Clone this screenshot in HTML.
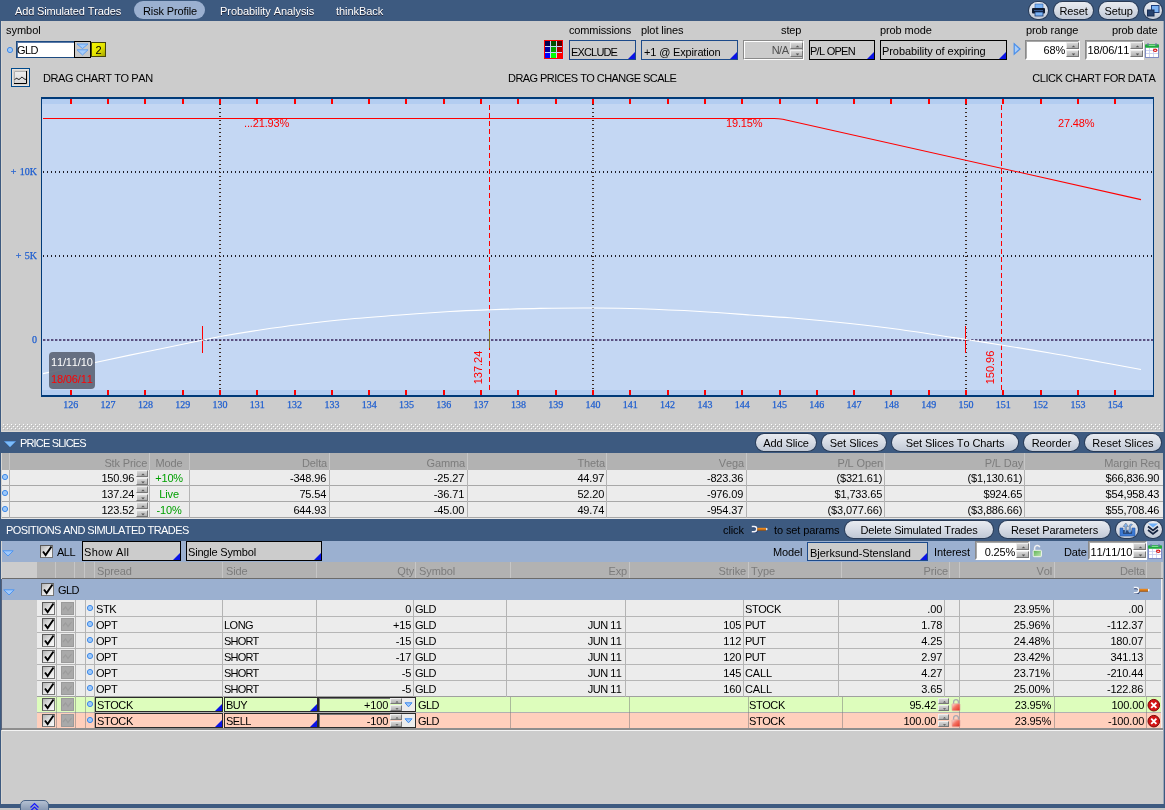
<!DOCTYPE html>
<html><head><meta charset="utf-8"><title>Risk Profile</title>
<style>
html,body{margin:0;padding:0;}
body{width:1165px;height:810px;overflow:hidden;position:relative;background:#3d5a80;font-family:"Liberation Sans",sans-serif;font-size:11px;color:#000;font-kerning:none;}
.a{position:absolute;}
.t{white-space:nowrap;line-height:13px;height:13px;}
.s{white-space:nowrap;word-spacing:1px;font-family:"Liberation Serif",serif;font-size:10px;line-height:12px;color:#1f5fd0;-webkit-text-stroke:0.25px #1f5fd0;}
.sb{box-sizing:border-box;border:1px solid;border-color:#eee #777 #777 #eee;background:linear-gradient(#d8d8d8,#b0b0b0);}
</style></head><body>
<div id="root" style="position:absolute;left:0;top:0;width:1165px;height:810px;will-change:transform;">
<div class="a " style="left:0px;top:0px;width:1165px;height:21px;background:#3d5a80;"></div>
<div class="a t " style="left:15px;top:5px;letter-spacing:-0.14px;color:#fff;text-shadow:0 1px 0 #223;">Add Simulated Trades</div>
<div class="a " style="left:134px;top:1px;width:71px;height:18px;border-radius:9px;background:#9bb0d0;"></div>
<div class="a t " style="left:143px;top:5px;letter-spacing:-0.13px;">Risk Profile</div>
<div class="a t " style="left:220px;top:5px;letter-spacing:-0.06px;color:#fff;text-shadow:0 1px 0 #223;">Probability Analysis</div>
<div class="a t " style="left:336px;top:5px;letter-spacing:-0.06px;color:#fff;text-shadow:0 1px 0 #223;">thinkBack</div>
<div class="a " style="left:1029px;top:2px;width:19px;height:16.5px;border-radius:10px;background:linear-gradient(#e8ebf0,#d8dde6 45%,#c0c8d5);box-shadow:0 0 0 1px #2a3b55;"></div>
<div class="a " style="left:1054px;top:2px;width:39px;height:16.5px;border-radius:10px;background:linear-gradient(#e8ebf0,#d8dde6 45%,#c0c8d5);box-shadow:0 0 0 1px #2a3b55;"></div>
<div class="a t " style="left:1053.05px;width:41px;top:5px;text-align:center;letter-spacing:-0.10px;">Reset</div>
<div class="a " style="left:1099px;top:2px;width:39px;height:16.5px;border-radius:10px;background:linear-gradient(#e8ebf0,#d8dde6 45%,#c0c8d5);box-shadow:0 0 0 1px #2a3b55;"></div>
<div class="a t " style="left:1098.05px;width:41px;top:5px;text-align:center;letter-spacing:-0.10px;">Setup</div>
<div class="a " style="left:1144px;top:2px;width:18px;height:16.5px;border-radius:10px;background:linear-gradient(#e8ebf0,#d8dde6 45%,#c0c8d5);box-shadow:0 0 0 1px #2a3b55;"></div>
<svg class="a" style="left:1031px;top:3px" width="15" height="14" viewBox="0 0 15 14"><rect x="4" y="1" width="8" height="4.5" fill="#7ab2f4" stroke="#2c5aa0" stroke-width="0.6"/><rect x="1" y="5" width="13" height="5.5" rx="1" fill="#0e1a30"/><rect x="4" y="9" width="8" height="4" fill="#7ab2f4" stroke="#1c3a70" stroke-width="0.8"/><rect x="3" y="7" width="9" height="1" fill="#3a5a90"/></svg>
<svg class="a" style="left:1146px;top:3px" width="14" height="14" viewBox="0 0 14 14"><rect x="5.5" y="2.5" width="7.5" height="7" fill="#7ab2f4" stroke="#1b3c7a"/><rect x="1.5" y="7" width="6.5" height="6" fill="#26426e" stroke="#162c52"/></svg>
<div class="a " style="left:1px;top:21px;width:1px;height:783px;background:#d8d6d2;"></div>
<div class="a " style="left:2px;top:21px;width:1161px;height:411px;background:#cccccc;"></div>
<div class="a " style="left:1163px;top:21px;width:1px;height:411px;background:#9aa6b8;"></div>
<div class="a " style="left:1163px;top:541px;width:1px;height:263px;background:#9aa6b8;"></div>
<div class="a t " style="left:6px;top:24px;letter-spacing:-0.03px;">symbol</div>
<div class="a t " style="left:569px;top:24px;letter-spacing:-0.14px;">commissions</div>
<div class="a t " style="left:641px;top:24px;letter-spacing:-0.10px;">plot lines</div>
<div class="a t " style="left:781px;top:24px;letter-spacing:-0.10px;">step</div>
<div class="a t " style="left:880px;top:24px;letter-spacing:-0.10px;">prob mode</div>
<div class="a t " style="left:1026px;top:24px;letter-spacing:-0.10px;">prob range</div>
<div class="a t " style="left:1112px;top:24px;letter-spacing:-0.10px;">prob date</div>
<svg class="a" style="left:5.5px;top:46px" width="8" height="8"><circle cx="4" cy="4" r="2.6" fill="#9cc8fa" stroke="#3f8ae8" stroke-width="1"/></svg>
<div class="a " style="left:16px;top:41px;width:59px;height:17px;background:#fff;border:1px solid #1c4a80;box-sizing:border-box;box-shadow:inset 1px 1px 0 #5a7aa8;"></div>
<div class="a t " style="left:17px;top:44px;letter-spacing:-0.56px;">GLD</div>
<div class="a " style="left:74px;top:41px;width:17px;height:17px;background:#c8c8c8;border:1px solid #000;box-sizing:border-box;"></div>
<svg class="a" style="left:76px;top:43px" width="13" height="13" viewBox="0 0 13 13"><path d="M1 1 L12 1 L6.5 5.5 Z" fill="#a4ccfc" stroke="#5a9cf0" stroke-width="0.9"/><path d="M1 6.8 L12 6.8 L6.5 12 Z" fill="#a4ccfc" stroke="#5a9cf0" stroke-width="0.9"/></svg>
<div class="a " style="left:91px;top:42px;width:15px;height:15px;background:linear-gradient(135deg,#f6f600,#e4e400 55%,#a4a400);border:1px solid #45450a;box-sizing:border-box;"></div>
<div class="a t " style="left:91.58px;width:14px;top:44px;text-align:center;letter-spacing:-0.15px;">2</div>
<svg class="a" style="left:544px;top:40px" width="20" height="20" viewBox="0 0 20 20" shape-rendering="crispEdges"><rect x="1" y="1" width="19" height="19" fill="#bcd2f2"/><rect x="0" y="0" width="19" height="19" fill="#ff0000"/><rect x="1" y="1" width="17" height="17" fill="#c4d6f8"/><rect x="1" y="1" width="5" height="5" fill="#000050"/><rect x="7" y="1" width="5" height="5" fill="#005000"/><rect x="13" y="1" width="5" height="5" fill="#500000"/><rect x="1" y="7" width="5" height="5" fill="#0000a0"/><rect x="7" y="7" width="5" height="5" fill="#00a000"/><rect x="13" y="7" width="5" height="5" fill="#a80000"/><rect x="1" y="13" width="5" height="5" fill="#0000ff"/><rect x="7" y="13" width="5" height="5" fill="#00ff00"/><rect x="13" y="13" width="5" height="5" fill="#ff0000"/></svg>
<div class="a " style="left:569px;top:40px;width:67px;height:20px;background:#cccccc;border:1px solid #1c4a8a;box-sizing:border-box;"></div>
<svg class="a" style="left:628px;top:52px" width="7" height="7"><path d="M7 0 L7 7 L0 7 Z" fill="#0a14e6"/></svg>
<div class="a t " style="left:571px;top:46px;letter-spacing:-0.84px;">EXCLUDE</div>
<div class="a " style="left:641px;top:40px;width:97px;height:20px;background:#cccccc;border:1px solid #1c4a8a;box-sizing:border-box;"></div>
<svg class="a" style="left:730px;top:52px" width="7" height="7"><path d="M7 0 L7 7 L0 7 Z" fill="#0a14e6"/></svg>
<div class="a t " style="left:644px;top:46px;letter-spacing:-0.15px;">+1 @ Expiration</div>
<div class="a " style="left:743px;top:40px;width:61px;height:20px;background:#cccccc;border:1px solid;border-color:#8a8a8a #fff #fff #8a8a8a;box-sizing:border-box;"></div>
<div class="a " style="left:744px;top:41px;width:59px;height:18px;border:1px solid;border-color:#fff #8a8a8a #8a8a8a #fff;box-sizing:border-box;"></div>
<div class="a sb" style="left:790px;top:42px;width:13px;height:7px;"><svg class="a" style="left:0;top:0" width="13" height="7" viewBox="0 0 12 7"><path d="M4.2 4.2 L6 2.4 L7.8 4.2 Z" fill="#555"/></svg></div><div class="a sb" style="left:790px;top:50px;width:13px;height:7px;"><svg class="a" style="left:0;top:0" width="13" height="7" viewBox="0 0 12 7"><path d="M4.2 2.6 L6 4.4 L7.8 2.6 Z" fill="#555"/></svg></div>
<div class="a t " style="right:376.50px;top:44px;text-align:right;letter-spacing:-0.50px;color:#505050;">N/A</div>
<div class="a " style="left:809px;top:40px;width:66px;height:20px;background:#cccccc;border:1px solid #000;box-sizing:border-box;"></div>
<svg class="a" style="left:867px;top:52px" width="7" height="7"><path d="M7 0 L7 7 L0 7 Z" fill="#0a14e6"/></svg>
<div class="a t " style="left:810px;top:45px;letter-spacing:-0.73px;">P/L OPEN</div>
<div class="a " style="left:880px;top:40px;width:127px;height:20px;background:#cccccc;border:1px solid #000;box-sizing:border-box;"></div>
<svg class="a" style="left:999px;top:52px" width="7" height="7"><path d="M7 0 L7 7 L0 7 Z" fill="#0a14e6"/></svg>
<div class="a t " style="left:882px;top:45px;letter-spacing:-0.07px;">Probability of expiring</div>
<svg class="a" style="left:1013px;top:42px" width="9" height="14" viewBox="0 0 9 14"><path d="M1.2 1.8 L7 7 L1.2 12.2 Z" fill="#a9cdf8" stroke="#4a8fea" stroke-width="1.2"/></svg>
<div class="a " style="left:1025px;top:40px;width:55px;height:20px;background:#fff;border:1px solid;border-color:#8a8a8a #fff #fff #8a8a8a;box-sizing:border-box;"></div>
<div class="a " style="left:1026px;top:41px;width:53px;height:18px;border:1px solid;border-color:#a8a8a8 #fff #fff #a8a8a8;box-sizing:border-box;"></div>
<div class="a sb" style="left:1066px;top:42px;width:13px;height:7px;"><svg class="a" style="left:0;top:0" width="13" height="7" viewBox="0 0 12 7"><path d="M4.2 4.2 L6 2.4 L7.8 4.2 Z" fill="#555"/></svg></div><div class="a sb" style="left:1066px;top:50px;width:13px;height:7px;"><svg class="a" style="left:0;top:0" width="13" height="7" viewBox="0 0 12 7"><path d="M4.2 2.6 L6 4.4 L7.8 2.6 Z" fill="#555"/></svg></div>
<div class="a t " style="right:99.85px;top:44px;text-align:right;letter-spacing:-0.15px;color:#000;">68%</div>
<div class="a " style="left:1085px;top:40px;width:59px;height:20px;background:#fff;border:1px solid;border-color:#8a8a8a #fff #fff #8a8a8a;box-sizing:border-box;"></div>
<div class="a " style="left:1086px;top:41px;width:57px;height:18px;border:1px solid;border-color:#a8a8a8 #fff #fff #a8a8a8;box-sizing:border-box;"></div>
<div class="a sb" style="left:1130px;top:42px;width:13px;height:7px;"><svg class="a" style="left:0;top:0" width="13" height="7" viewBox="0 0 12 7"><path d="M4.2 4.2 L6 2.4 L7.8 4.2 Z" fill="#555"/></svg></div><div class="a sb" style="left:1130px;top:50px;width:13px;height:7px;"><svg class="a" style="left:0;top:0" width="13" height="7" viewBox="0 0 12 7"><path d="M4.2 2.6 L6 4.4 L7.8 2.6 Z" fill="#555"/></svg></div>
<div class="a t " style="right:35.85px;top:44px;text-align:right;letter-spacing:-0.15px;color:#000;">18/06/11</div>
<svg class="a" style="left:1145px;top:43px" width="14" height="15" viewBox="0 0 14 15"><rect x="0.5" y="3.5" width="13" height="11" fill="#fff" stroke="#7f8cc4"/><rect x="0" y="1.2" width="14" height="3.6" rx="1" fill="#1faa3c"/><rect x="3.5" y="2" width="7" height="1" fill="#7fe08f"/><rect x="2.5" y="0" width="1" height="3" fill="#6a6ab0"/><rect x="10.5" y="0" width="1" height="3" fill="#6a6ab0"/><path d="M1 7.5 H13 M1 10.5 H13 M4.5 5 V14 M8.5 5 V14" stroke="#c4cbee" stroke-width="0.8"/><ellipse cx="10.2" cy="7.3" rx="1.7" ry="1.2" fill="#fbe0e0" stroke="#d81818" stroke-width="1.1"/></svg>
<div class="a " style="left:11px;top:68px;width:19px;height:19px;background:#d6d3ce;border:1px solid #004a8c;box-sizing:border-box;box-shadow:inset 0 0 0 1px #e6e2de;"></div>
<svg class="a" style="left:14px;top:71px" width="13" height="13" viewBox="0 0 13 13"><defs><linearGradient id="ig" x1="0" y1="0" x2="0" y2="1"><stop offset="0" stop-color="#efefef"/><stop offset="1" stop-color="#d6d6d6"/></linearGradient></defs><rect x="0" y="0" width="13" height="13" fill="url(#ig)"/><path d="M0.5 12 V0.5 H12" stroke="#b0b0b0" stroke-width="1" fill="none"/><path d="M0 12.5 H12.5 V0" stroke="#000" stroke-width="1" fill="none"/><path d="M0.8 8.6 C1.8 7.2 2.6 7 3.6 7.8 S5.4 8.8 6.4 7.4 S8.2 6 9.2 7 S11 8.4 12 8.4" stroke="#000" stroke-width="1" fill="none"/></svg>
<div class="a t " style="left:43px;top:72px;letter-spacing:-0.41px;">DRAG CHART TO PAN</div>
<div class="a t " style="left:508px;top:72px;letter-spacing:-0.56px;">DRAG PRICES TO CHANGE SCALE</div>
<div class="a t " style="right:9.56px;top:72px;text-align:right;letter-spacing:-0.44px;">CLICK CHART FOR DATA</div>
<svg class="a" style="left:0;top:90px" width="1165" height="330" viewBox="0 90 1165 330" shape-rendering="crispEdges"><rect x="41" y="97" width="1113" height="300" fill="#003a78"/><rect x="42" y="99" width="1111" height="296" fill="#c4d7f3"/><rect x="42" y="99" width="1111" height="5" fill="#b3cdf1"/><rect x="42" y="390" width="1111" height="5" fill="#b3cdf1"/><line x1="43" y1="172" x2="1153" y2="172" stroke="#1e1e28" stroke-width="2" stroke-dasharray="1 3"/><line x1="43" y1="256" x2="1153" y2="256" stroke="#1e1e28" stroke-width="2" stroke-dasharray="1 3"/><line x1="43" y1="340" x2="1153" y2="340" stroke="#5a5080" stroke-width="2" stroke-dasharray="2.4 1.6" shape-rendering="auto"/><line x1="220" y1="99" x2="220" y2="390" stroke="#3c2a22" stroke-width="2" stroke-dasharray="1 3" stroke-dashoffset="-1"/><line x1="593" y1="99" x2="593" y2="390" stroke="#3c2a22" stroke-width="2" stroke-dasharray="1 3" stroke-dashoffset="-1"/><line x1="966" y1="99" x2="966" y2="390" stroke="#3c2a22" stroke-width="2" stroke-dasharray="1 3" stroke-dashoffset="-1"/><rect x="70" y="99" width="2" height="5" fill="#f00"/><rect x="70" y="390" width="2" height="5" fill="#f00"/><rect x="107" y="99" width="2" height="5" fill="#f00"/><rect x="107" y="390" width="2" height="5" fill="#f00"/><rect x="144" y="99" width="2" height="5" fill="#f00"/><rect x="144" y="390" width="2" height="5" fill="#f00"/><rect x="182" y="99" width="2" height="5" fill="#f00"/><rect x="182" y="390" width="2" height="5" fill="#f00"/><rect x="219" y="99" width="2" height="5" fill="#f00"/><rect x="219" y="390" width="2" height="5" fill="#f00"/><rect x="256" y="99" width="2" height="5" fill="#f00"/><rect x="256" y="390" width="2" height="5" fill="#f00"/><rect x="294" y="99" width="2" height="5" fill="#f00"/><rect x="294" y="390" width="2" height="5" fill="#f00"/><rect x="331" y="99" width="2" height="5" fill="#f00"/><rect x="331" y="390" width="2" height="5" fill="#f00"/><rect x="368" y="99" width="2" height="5" fill="#f00"/><rect x="368" y="390" width="2" height="5" fill="#f00"/><rect x="405" y="99" width="2" height="5" fill="#f00"/><rect x="405" y="390" width="2" height="5" fill="#f00"/><rect x="443" y="99" width="2" height="5" fill="#f00"/><rect x="443" y="390" width="2" height="5" fill="#f00"/><rect x="480" y="99" width="2" height="5" fill="#f00"/><rect x="480" y="390" width="2" height="5" fill="#f00"/><rect x="517" y="99" width="2" height="5" fill="#f00"/><rect x="517" y="390" width="2" height="5" fill="#f00"/><rect x="555" y="99" width="2" height="5" fill="#f00"/><rect x="555" y="390" width="2" height="5" fill="#f00"/><rect x="592" y="99" width="2" height="5" fill="#f00"/><rect x="592" y="390" width="2" height="5" fill="#f00"/><rect x="629" y="99" width="2" height="5" fill="#f00"/><rect x="629" y="390" width="2" height="5" fill="#f00"/><rect x="667" y="99" width="2" height="5" fill="#f00"/><rect x="667" y="390" width="2" height="5" fill="#f00"/><rect x="704" y="99" width="2" height="5" fill="#f00"/><rect x="704" y="390" width="2" height="5" fill="#f00"/><rect x="741" y="99" width="2" height="5" fill="#f00"/><rect x="741" y="390" width="2" height="5" fill="#f00"/><rect x="779" y="99" width="2" height="5" fill="#f00"/><rect x="779" y="390" width="2" height="5" fill="#f00"/><rect x="816" y="99" width="2" height="5" fill="#f00"/><rect x="816" y="390" width="2" height="5" fill="#f00"/><rect x="853" y="99" width="2" height="5" fill="#f00"/><rect x="853" y="390" width="2" height="5" fill="#f00"/><rect x="890" y="99" width="2" height="5" fill="#f00"/><rect x="890" y="390" width="2" height="5" fill="#f00"/><rect x="928" y="99" width="2" height="5" fill="#f00"/><rect x="928" y="390" width="2" height="5" fill="#f00"/><rect x="965" y="99" width="2" height="5" fill="#f00"/><rect x="965" y="390" width="2" height="5" fill="#f00"/><rect x="1002" y="99" width="2" height="5" fill="#f00"/><rect x="1002" y="390" width="2" height="5" fill="#f00"/><rect x="1040" y="99" width="2" height="5" fill="#f00"/><rect x="1040" y="390" width="2" height="5" fill="#f00"/><rect x="1077" y="99" width="2" height="5" fill="#f00"/><rect x="1077" y="390" width="2" height="5" fill="#f00"/><rect x="1114" y="99" width="2" height="5" fill="#f00"/><rect x="1114" y="390" width="2" height="5" fill="#f00"/><line x1="489.5" y1="105" x2="489.5" y2="390" stroke="#f00" stroke-width="1" stroke-dasharray="5 3"/><line x1="1001.5" y1="105" x2="1001.5" y2="390" stroke="#f00" stroke-width="1" stroke-dasharray="5 3"/><line x1="489.5" y1="331" x2="489.5" y2="348" stroke="#8a7a2c" stroke-width="1"/><line x1="202.5" y1="326" x2="202.5" y2="353" stroke="#f00" stroke-width="1"/><line x1="965.5" y1="326" x2="965.5" y2="353" stroke="#f00" stroke-width="1"/></svg>
<svg class="a" style="left:0;top:90px" width="1165" height="330" viewBox="0 90 1165 330"><path d="M43 373.6 C52.5 371.6 82.2 365.3 100 361.5 C117.8 357.7 133.0 354.5 150 351 C167.0 347.5 190.3 342.7 202 340.3 C213.7 337.9 210.3 338.2 220 336.5 C229.7 334.8 246.7 332.0 260 330 C273.3 328.0 285.0 326.3 300 324.5 C315.0 322.7 333.3 320.6 350 319 C366.7 317.4 383.3 316.2 400 315 C416.7 313.8 435.0 312.4 450 311.5 C465.0 310.6 475.0 310.3 490 309.8 C505.0 309.3 522.8 308.7 540 308.4 C557.2 308.1 576.3 307.9 593 308 C609.7 308.1 622.2 308.2 640 308.8 C657.8 309.4 681.7 310.5 700 311.5 C718.3 312.5 735.0 313.9 750 315 C765.0 316.1 773.3 316.4 790 317.8 C806.7 319.2 831.7 321.6 850 323.5 C868.3 325.4 880.7 326.8 900 329.5 C919.3 332.2 949.2 336.9 966 339.5 C982.8 342.1 987.0 342.8 1001 345 C1015.0 347.2 1033.5 350.2 1050 353 C1066.5 355.8 1084.8 359.2 1100 362 C1115.2 364.8 1134.2 368.2 1141 369.5" stroke="#fff" stroke-width="1.15" fill="none"/><path d="M43 118.5 L774 118.5 C780 118.5 781 119 785 119.7 L1141 199.6" stroke="#f00" stroke-width="1.1" fill="none"/></svg>
<div class="a t " style="left:244px;top:117px;letter-spacing:-0.15px;color:#f00;">...21.93%</div>
<div class="a t " style="left:726px;top:117px;letter-spacing:-0.15px;color:#f00;">19.15%</div>
<div class="a t " style="left:1058px;top:117px;letter-spacing:-0.15px;color:#f00;">27.48%</div>
<div class="a t" style="left:448px;top:361px;width:60px;height:13px;text-align:center;color:#f00;transform:rotate(-90deg);">137.24</div>
<div class="a t" style="left:960px;top:361px;width:60px;height:13px;text-align:center;color:#f00;transform:rotate(-90deg);">150.96</div>
<div class="a s" style="right:1128px;top:166px;">+ 10K</div>
<div class="a s" style="right:1128px;top:250px;">+ 5K</div>
<div class="a s" style="right:1128px;top:334px;">0</div>
<div class="a s" style="left:50.80000000000001px;width:40px;text-align:center;top:399px;">126</div>
<div class="a s" style="left:88.10000000000001px;width:40px;text-align:center;top:399px;">127</div>
<div class="a s" style="left:125.4px;width:40px;text-align:center;top:399px;">128</div>
<div class="a s" style="left:162.7px;width:40px;text-align:center;top:399px;">129</div>
<div class="a s" style="left:200.0px;width:40px;text-align:center;top:399px;">130</div>
<div class="a s" style="left:237.3px;width:40px;text-align:center;top:399px;">131</div>
<div class="a s" style="left:274.6px;width:40px;text-align:center;top:399px;">132</div>
<div class="a s" style="left:311.9px;width:40px;text-align:center;top:399px;">133</div>
<div class="a s" style="left:349.2px;width:40px;text-align:center;top:399px;">134</div>
<div class="a s" style="left:386.5px;width:40px;text-align:center;top:399px;">135</div>
<div class="a s" style="left:423.79999999999995px;width:40px;text-align:center;top:399px;">136</div>
<div class="a s" style="left:461.09999999999997px;width:40px;text-align:center;top:399px;">137</div>
<div class="a s" style="left:498.4px;width:40px;text-align:center;top:399px;">138</div>
<div class="a s" style="left:535.7px;width:40px;text-align:center;top:399px;">139</div>
<div class="a s" style="left:573.0px;width:40px;text-align:center;top:399px;">140</div>
<div class="a s" style="left:610.3px;width:40px;text-align:center;top:399px;">141</div>
<div class="a s" style="left:647.5999999999999px;width:40px;text-align:center;top:399px;">142</div>
<div class="a s" style="left:684.9px;width:40px;text-align:center;top:399px;">143</div>
<div class="a s" style="left:722.1999999999999px;width:40px;text-align:center;top:399px;">144</div>
<div class="a s" style="left:759.5px;width:40px;text-align:center;top:399px;">145</div>
<div class="a s" style="left:796.8px;width:40px;text-align:center;top:399px;">146</div>
<div class="a s" style="left:834.0999999999999px;width:40px;text-align:center;top:399px;">147</div>
<div class="a s" style="left:871.4px;width:40px;text-align:center;top:399px;">148</div>
<div class="a s" style="left:908.6999999999999px;width:40px;text-align:center;top:399px;">149</div>
<div class="a s" style="left:946.0px;width:40px;text-align:center;top:399px;">150</div>
<div class="a s" style="left:983.3px;width:40px;text-align:center;top:399px;">151</div>
<div class="a s" style="left:1020.5999999999999px;width:40px;text-align:center;top:399px;">152</div>
<div class="a s" style="left:1057.9px;width:40px;text-align:center;top:399px;">153</div>
<div class="a s" style="left:1095.1999999999998px;width:40px;text-align:center;top:399px;">154</div>
<div class="a " style="left:49px;top:352px;width:46px;height:37px;background:rgba(92,100,116,.9);border-radius:4px;"></div>
<div class="a t " style="left:51px;top:356px;letter-spacing:-0.15px;color:#fff;">11/11/10</div>
<div class="a t " style="left:51px;top:373px;letter-spacing:-0.15px;color:#f00;">18/06/11</div>
<svg class="a" style="left:2px;top:424px" width="1159" height="6" shape-rendering="crispEdges"><defs><pattern id="dots" x="0" y="0" width="4" height="4" patternUnits="userSpaceOnUse"><rect x="1" y="0" width="1" height="1" fill="#fff"/><rect x="3" y="2" width="1" height="1" fill="#fff"/><rect x="2" y="1" width="1" height="1" fill="#b6b6b6"/><rect x="0" y="3" width="1" height="1" fill="#b6b6b6"/></pattern></defs><rect x="0" y="0" width="1159" height="6" fill="url(#dots)"/></svg>
<div class="a " style="left:2px;top:431px;width:1161px;height:1px;background:#dcd9d5;"></div>
<div class="a " style="left:0px;top:432px;width:1165px;height:21px;background:#3d5a80;"></div>
<svg class="a" style="left:4px;top:441px" width="12" height="7"><path d="M0.5 0.5 L11.5 0.5 L6 6 Z" fill="#7cbcfa" stroke="#5aa0f0" stroke-width="0.6"/></svg>
<div class="a t " style="left:20px;top:437px;letter-spacing:-0.83px;color:#fff;">PRICE SLICES</div>
<div class="a " style="left:756px;top:434px;width:60px;height:17px;border-radius:10px;background:linear-gradient(#e8ebf0,#d8dde6 45%,#c0c8d5);box-shadow:0 0 0 1px #2a3b55;"></div>
<div class="a t " style="left:755.05px;width:62px;top:437px;text-align:center;letter-spacing:-0.10px;">Add Slice</div>
<div class="a " style="left:822px;top:434px;width:64px;height:17px;border-radius:10px;background:linear-gradient(#e8ebf0,#d8dde6 45%,#c0c8d5);box-shadow:0 0 0 1px #2a3b55;"></div>
<div class="a t " style="left:821.01px;width:66px;top:437px;text-align:center;letter-spacing:-0.02px;">Set Slices</div>
<div class="a " style="left:892px;top:434px;width:126px;height:17px;border-radius:10px;background:linear-gradient(#e8ebf0,#d8dde6 45%,#c0c8d5);box-shadow:0 0 0 1px #2a3b55;"></div>
<div class="a t " style="left:891.04px;width:128px;top:437px;text-align:center;letter-spacing:-0.08px;">Set Slices To Charts</div>
<div class="a " style="left:1024px;top:434px;width:55px;height:17px;border-radius:10px;background:linear-gradient(#e8ebf0,#d8dde6 45%,#c0c8d5);box-shadow:0 0 0 1px #2a3b55;"></div>
<div class="a t " style="left:1023.00px;width:57px;top:437px;text-align:center;letter-spacing:-0.01px;">Reorder</div>
<div class="a " style="left:1085px;top:434px;width:76px;height:17px;border-radius:10px;background:linear-gradient(#e8ebf0,#d8dde6 45%,#c0c8d5);box-shadow:0 0 0 1px #2a3b55;"></div>
<div class="a t " style="left:1084.00px;width:78px;top:437px;text-align:center;letter-spacing:0.01px;">Reset Slices</div>
<div class="a " style="left:2px;top:453px;width:1161px;height:17px;background:#b2b2b2;"></div>
<div class="a " style="left:2px;top:470px;width:1161px;height:48px;background:#ececec;"></div>
<div class="a " style="left:2px;top:485px;width:1161px;height:1px;background:#a8a8a8;"></div>
<div class="a " style="left:2px;top:501px;width:1161px;height:1px;background:#a8a8a8;"></div>
<div class="a " style="left:2px;top:517px;width:1161px;height:1px;background:#a8a8a8;"></div>
<div class="a " style="left:2px;top:518px;width:1161px;height:1px;background:#e8e8e8;"></div>
<div class="a " style="left:9px;top:453px;width:1px;height:17px;background:#c6c6c6;"></div>
<div class="a " style="left:9px;top:470px;width:1px;height:48px;background:#b4b4b4;"></div>
<div class="a " style="left:149px;top:453px;width:1px;height:17px;background:#c6c6c6;"></div>
<div class="a " style="left:149px;top:470px;width:1px;height:48px;background:#b4b4b4;"></div>
<div class="a " style="left:189px;top:453px;width:1px;height:17px;background:#c6c6c6;"></div>
<div class="a " style="left:189px;top:470px;width:1px;height:48px;background:#b4b4b4;"></div>
<div class="a " style="left:329px;top:453px;width:1px;height:17px;background:#c6c6c6;"></div>
<div class="a " style="left:329px;top:470px;width:1px;height:48px;background:#b4b4b4;"></div>
<div class="a " style="left:467px;top:453px;width:1px;height:17px;background:#c6c6c6;"></div>
<div class="a " style="left:467px;top:470px;width:1px;height:48px;background:#b4b4b4;"></div>
<div class="a " style="left:606px;top:453px;width:1px;height:17px;background:#c6c6c6;"></div>
<div class="a " style="left:606px;top:470px;width:1px;height:48px;background:#b4b4b4;"></div>
<div class="a " style="left:746px;top:453px;width:1px;height:17px;background:#c6c6c6;"></div>
<div class="a " style="left:746px;top:470px;width:1px;height:48px;background:#b4b4b4;"></div>
<div class="a " style="left:884px;top:453px;width:1px;height:17px;background:#c6c6c6;"></div>
<div class="a " style="left:884px;top:470px;width:1px;height:48px;background:#b4b4b4;"></div>
<div class="a " style="left:1024px;top:453px;width:1px;height:17px;background:#c6c6c6;"></div>
<div class="a " style="left:1024px;top:470px;width:1px;height:48px;background:#b4b4b4;"></div>
<div class="a t " style="right:1017.86px;top:457px;text-align:right;letter-spacing:-0.14px;color:#7c7c7c;">Stk Price</div>
<div class="a t " style="left:149.05px;width:40px;top:457px;text-align:center;letter-spacing:-0.10px;color:#7c7c7c;">Mode</div>
<div class="a t " style="right:837.90px;top:457px;text-align:right;letter-spacing:-0.10px;color:#7c7c7c;">Delta</div>
<div class="a t " style="right:699.90px;top:457px;text-align:right;letter-spacing:-0.10px;color:#7c7c7c;">Gamma</div>
<div class="a t " style="right:559.90px;top:457px;text-align:right;letter-spacing:-0.10px;color:#7c7c7c;">Theta</div>
<div class="a t " style="right:420.90px;top:457px;text-align:right;letter-spacing:-0.10px;color:#7c7c7c;">Vega</div>
<div class="a t " style="right:281.90px;top:457px;text-align:right;letter-spacing:-0.10px;color:#7c7c7c;">P/L Open</div>
<div class="a t " style="right:141.90px;top:457px;text-align:right;letter-spacing:-0.10px;color:#7c7c7c;">P/L Day</div>
<div class="a t " style="right:4.90px;top:457px;text-align:right;letter-spacing:-0.10px;color:#7c7c7c;">Margin Req</div>
<svg class="a" style="left:1px;top:473px" width="8" height="8"><circle cx="4" cy="4" r="2.6" fill="#9cc8fa" stroke="#3f8ae8" stroke-width="1"/></svg>
<div class="a t " style="right:1030.85px;top:472px;text-align:right;letter-spacing:-0.15px;">150.96</div>
<div class="a sb" style="left:136px;top:470px;width:12px;height:7px;"><svg class="a" style="left:0;top:0" width="12" height="7" viewBox="0 0 12 7"><path d="M4.2 4.2 L6 2.4 L7.8 4.2 Z" fill="#555"/></svg></div><div class="a sb" style="left:136px;top:478px;width:12px;height:7px;"><svg class="a" style="left:0;top:0" width="12" height="7" viewBox="0 0 12 7"><path d="M4.2 2.6 L6 4.4 L7.8 2.6 Z" fill="#555"/></svg></div>
<div class="a t " style="left:149.07px;width:40px;top:472px;text-align:center;letter-spacing:-0.15px;color:#00a000;">+10%</div>
<div class="a t " style="right:838.85px;top:472px;text-align:right;letter-spacing:-0.15px;">-348.96</div>
<div class="a t " style="right:700.85px;top:472px;text-align:right;letter-spacing:-0.15px;">-25.27</div>
<div class="a t " style="right:560.85px;top:472px;text-align:right;letter-spacing:-0.15px;">44.97</div>
<div class="a t " style="right:421.85px;top:472px;text-align:right;letter-spacing:-0.15px;">-823.36</div>
<div class="a t " style="right:282.85px;top:472px;text-align:right;letter-spacing:-0.15px;">($321.61)</div>
<div class="a t " style="right:142.85px;top:472px;text-align:right;letter-spacing:-0.15px;">($1,130.61)</div>
<div class="a t " style="right:5.85px;top:472px;text-align:right;letter-spacing:-0.15px;">$66,836.90</div>
<svg class="a" style="left:1px;top:489px" width="8" height="8"><circle cx="4" cy="4" r="2.6" fill="#9cc8fa" stroke="#3f8ae8" stroke-width="1"/></svg>
<div class="a t " style="right:1030.85px;top:488px;text-align:right;letter-spacing:-0.15px;">137.24</div>
<div class="a sb" style="left:136px;top:486px;width:12px;height:7px;"><svg class="a" style="left:0;top:0" width="12" height="7" viewBox="0 0 12 7"><path d="M4.2 4.2 L6 2.4 L7.8 4.2 Z" fill="#555"/></svg></div><div class="a sb" style="left:136px;top:494px;width:12px;height:7px;"><svg class="a" style="left:0;top:0" width="12" height="7" viewBox="0 0 12 7"><path d="M4.2 2.6 L6 4.4 L7.8 2.6 Z" fill="#555"/></svg></div>
<div class="a t " style="left:149.05px;width:40px;top:488px;text-align:center;letter-spacing:-0.10px;color:#00a000;">Live</div>
<div class="a t " style="right:838.85px;top:488px;text-align:right;letter-spacing:-0.15px;">75.54</div>
<div class="a t " style="right:700.85px;top:488px;text-align:right;letter-spacing:-0.15px;">-36.71</div>
<div class="a t " style="right:560.85px;top:488px;text-align:right;letter-spacing:-0.15px;">52.20</div>
<div class="a t " style="right:421.85px;top:488px;text-align:right;letter-spacing:-0.15px;">-976.09</div>
<div class="a t " style="right:282.85px;top:488px;text-align:right;letter-spacing:-0.15px;">$1,733.65</div>
<div class="a t " style="right:142.85px;top:488px;text-align:right;letter-spacing:-0.15px;">$924.65</div>
<div class="a t " style="right:5.85px;top:488px;text-align:right;letter-spacing:-0.15px;">$54,958.43</div>
<svg class="a" style="left:1px;top:505px" width="8" height="8"><circle cx="4" cy="4" r="2.6" fill="#9cc8fa" stroke="#3f8ae8" stroke-width="1"/></svg>
<div class="a t " style="right:1030.85px;top:504px;text-align:right;letter-spacing:-0.15px;">123.52</div>
<div class="a sb" style="left:136px;top:502px;width:12px;height:7px;"><svg class="a" style="left:0;top:0" width="12" height="7" viewBox="0 0 12 7"><path d="M4.2 4.2 L6 2.4 L7.8 4.2 Z" fill="#555"/></svg></div><div class="a sb" style="left:136px;top:510px;width:12px;height:7px;"><svg class="a" style="left:0;top:0" width="12" height="7" viewBox="0 0 12 7"><path d="M4.2 2.6 L6 4.4 L7.8 2.6 Z" fill="#555"/></svg></div>
<div class="a t " style="left:149.07px;width:40px;top:504px;text-align:center;letter-spacing:-0.15px;color:#00a000;">-10%</div>
<div class="a t " style="right:838.85px;top:504px;text-align:right;letter-spacing:-0.15px;">644.93</div>
<div class="a t " style="right:700.85px;top:504px;text-align:right;letter-spacing:-0.15px;">-45.00</div>
<div class="a t " style="right:560.85px;top:504px;text-align:right;letter-spacing:-0.15px;">49.74</div>
<div class="a t " style="right:421.85px;top:504px;text-align:right;letter-spacing:-0.15px;">-954.37</div>
<div class="a t " style="right:282.85px;top:504px;text-align:right;letter-spacing:-0.15px;">($3,077.66)</div>
<div class="a t " style="right:142.85px;top:504px;text-align:right;letter-spacing:-0.15px;">($3,886.66)</div>
<div class="a t " style="right:5.85px;top:504px;text-align:right;letter-spacing:-0.15px;">$55,708.46</div>
<div class="a " style="left:0px;top:519px;width:1165px;height:22px;background:#3d5a80;"></div>
<div class="a t " style="left:6px;top:524px;letter-spacing:-0.57px;color:#fff;">POSITIONS AND SIMULATED TRADES</div>
<div class="a t " style="left:723px;top:524px;letter-spacing:-0.10px;">click</div>
<div class="a t " style="left:774px;top:524px;letter-spacing:-0.10px;">to set params</div>
<svg class="a" style="left:751px;top:525px" width="17" height="8" viewBox="0 0 17 8"><path d="M0.8 1.9 H3.2 A2.6 2.6 0 0 1 3.2 7.1 H0.8" stroke="#22386a" stroke-width="1.6" fill="none" transform="translate(0.4,0.5)"/><path d="M0.8 1.5 H3.2 A2.6 2.6 0 0 1 3.2 6.7 H0.8" stroke="#f4f6fb" stroke-width="1.5" fill="none"/><rect x="6.4" y="2.8" width="8.6" height="2.6" fill="#e8861c"/><rect x="6.4" y="4.7" width="8.6" height="0.9" fill="#8a4a10"/><path d="M15 2.8 L17 4.1 L15 5.5 Z" fill="#f4f4f4"/></svg>
<div class="a " style="left:845px;top:521px;width:148px;height:17px;border-radius:10px;background:linear-gradient(#e8ebf0,#d8dde6 45%,#c0c8d5);box-shadow:0 0 0 1px #2a3b55;"></div>
<div class="a t " style="left:844.09px;width:150px;top:524px;text-align:center;letter-spacing:-0.18px;">Delete Simulated Trades</div>
<div class="a " style="left:999px;top:521px;width:111px;height:17px;border-radius:10px;background:linear-gradient(#e8ebf0,#d8dde6 45%,#c0c8d5);box-shadow:0 0 0 1px #2a3b55;"></div>
<div class="a t " style="left:998.05px;width:113px;top:524px;text-align:center;letter-spacing:-0.10px;">Reset Parameters</div>
<div class="a " style="left:1116px;top:521px;width:22px;height:17px;border-radius:10px;background:linear-gradient(#e8ebf0,#d8dde6 45%,#c0c8d5);box-shadow:0 0 0 1px #2a3b55;"></div>
<div class="a " style="left:1144px;top:521px;width:18px;height:17px;border-radius:10px;background:linear-gradient(#e8ebf0,#d8dde6 45%,#c0c8d5);box-shadow:0 0 0 1px #2a3b55;"></div>
<svg class="a" style="left:1119px;top:522px" width="17" height="15" viewBox="0 0 17 15"><path d="M1 6 H4 V11 H13 V6 H16 V14 H1 Z" fill="#3c7ad4" stroke="#2a5aa8" stroke-width="0.6"/><rect x="4" y="8" width="9" height="4" fill="#274a80"/><path d="M6 11 V4.5 H4.2 L6.8 1 L9.4 4.5 H7.6 V8" fill="#7fb4f2" stroke="#7a8596" stroke-width="0.7"/><path d="M10.2 4 C10.5 2 12.5 1.5 13.5 2.5 L12.6 3.6 C11.8 3.4 11.6 4 11.6 5 V8 H13.2 L10.8 11 L8.4 8 H10.2 Z" fill="#6ba6ee" stroke="#7a8596" stroke-width="0.6"/></svg>
<svg class="a" style="left:1147px;top:523px" width="12" height="13" viewBox="0 0 12 13"><path d="M1 0.5 L11 0.5 L6 4.5 Z" fill="#6fb0f8"/><path d="M1 3.5 L6 7.5 L11 3.5 M1 7 L6 11 L11 7" stroke="#14233f" stroke-width="1.7" fill="none"/></svg>
<div class="a " style="left:2px;top:541px;width:1161px;height:21px;background:#9bb0d0;"></div>
<svg class="a" style="left:2px;top:550px" width="12" height="7"><path d="M0.8 0.8 L11.2 0.8 L6 6 Z" fill="#a0c9fb" stroke="#4f95f0" stroke-width="1"/></svg>
<div class="a " style="left:40px;top:545px;width:13px;height:13px;box-sizing:border-box;border:1px solid;border-color:#5a5a5a #777 #777 #5a5a5a;background:linear-gradient(135deg,#b4b4b4,#e4e4e4 50%,#f8f8f8);"></div>
<svg class="a" style="left:40px;top:545px;overflow:visible" width="13" height="13"><path d="M3 6.5 L5.6 10 L11.5 1.5" stroke="#000" stroke-width="1.9" fill="none"/></svg>
<div class="a t " style="left:57px;top:546px;letter-spacing:-0.50px;">ALL</div>
<div class="a " style="left:82px;top:541px;width:99px;height:20px;background:#cccccc;border:1px solid #000;box-sizing:border-box;"></div>
<svg class="a" style="left:173px;top:553px" width="7" height="7"><path d="M7 0 L7 7 L0 7 Z" fill="#0a14e6"/></svg>
<div class="a t " style="left:84px;top:546px;letter-spacing:0.31px;">Show All</div>
<div class="a " style="left:186px;top:541px;width:136px;height:20px;background:#cccccc;border:1px solid #000;box-sizing:border-box;"></div>
<svg class="a" style="left:314px;top:553px" width="7" height="7"><path d="M7 0 L7 7 L0 7 Z" fill="#0a14e6"/></svg>
<div class="a t " style="left:188px;top:546px;letter-spacing:-0.18px;">Single Symbol</div>
<div class="a t " style="left:773px;top:546px;letter-spacing:-0.10px;">Model</div>
<div class="a " style="left:807px;top:542px;width:121px;height:19px;background:#cccccc;border:1px solid #1c4a8a;box-sizing:border-box;"></div>
<svg class="a" style="left:920px;top:553px" width="7" height="7"><path d="M7 0 L7 7 L0 7 Z" fill="#0a14e6"/></svg>
<div class="a t " style="left:810px;top:547px;letter-spacing:-0.03px;">Bjerksund-Stensland</div>
<div class="a t " style="left:934px;top:546px;letter-spacing:-0.10px;">Interest</div>
<div class="a " style="left:975px;top:541px;width:55px;height:19px;background:#fff;border:1px solid;border-color:#8a8a8a #fff #fff #8a8a8a;box-sizing:border-box;"></div>
<div class="a " style="left:976px;top:542px;width:53px;height:17px;border:1px solid;border-color:#a8a8a8 #fff #fff #a8a8a8;box-sizing:border-box;"></div>
<div class="a sb" style="left:1016px;top:543px;width:13px;height:7px;"><svg class="a" style="left:0;top:0" width="13" height="7" viewBox="0 0 12 7"><path d="M4.2 4.2 L6 2.4 L7.8 4.2 Z" fill="#555"/></svg></div><div class="a sb" style="left:1016px;top:551px;width:13px;height:7px;"><svg class="a" style="left:0;top:0" width="13" height="7" viewBox="0 0 12 7"><path d="M4.2 2.6 L6 4.4 L7.8 2.6 Z" fill="#555"/></svg></div>
<div class="a t " style="right:149.85px;top:546px;text-align:right;letter-spacing:-0.15px;color:#000;">0.25%</div>
<svg class="a" style="left:1032px;top:544px" width="11" height="14" viewBox="0 0 11 14"><defs><linearGradient id="lg" x1="0" y1="0" x2="1" y2="1"><stop offset="0" stop-color="#58b050"/><stop offset="1" stop-color="#c4e8b4"/></linearGradient></defs><path d="M2.6 6.5 V4 A2.7 2.7 0 0 1 7.8 3.2" stroke="#f2f2f2" stroke-width="1.5" fill="none"/><rect x="1.2" y="6.3" width="8.2" height="6.4" rx="0.8" fill="url(#lg)" stroke="#f0f4ee" stroke-width="1"/></svg>
<div class="a t " style="left:1064px;top:546px;letter-spacing:-0.10px;">Date</div>
<div class="a " style="left:1088px;top:541px;width:59px;height:19px;background:#fff;border:1px solid;border-color:#8a8a8a #fff #fff #8a8a8a;box-sizing:border-box;"></div>
<div class="a " style="left:1089px;top:542px;width:57px;height:17px;border:1px solid;border-color:#a8a8a8 #fff #fff #a8a8a8;box-sizing:border-box;"></div>
<div class="a sb" style="left:1133px;top:543px;width:13px;height:7px;"><svg class="a" style="left:0;top:0" width="13" height="7" viewBox="0 0 12 7"><path d="M4.2 4.2 L6 2.4 L7.8 4.2 Z" fill="#555"/></svg></div><div class="a sb" style="left:1133px;top:551px;width:13px;height:7px;"><svg class="a" style="left:0;top:0" width="13" height="7" viewBox="0 0 12 7"><path d="M4.2 2.6 L6 4.4 L7.8 2.6 Z" fill="#555"/></svg></div>
<div class="a t " style="right:32.85px;top:546px;text-align:right;letter-spacing:-0.15px;color:#000;">11/11/10</div>
<svg class="a" style="left:1148px;top:544px" width="14" height="15" viewBox="0 0 14 15"><rect x="0.5" y="3.5" width="13" height="11" fill="#fff" stroke="#7f8cc4"/><rect x="0" y="1.2" width="14" height="3.6" rx="1" fill="#1faa3c"/><rect x="3.5" y="2" width="7" height="1" fill="#7fe08f"/><rect x="2.5" y="0" width="1" height="3" fill="#6a6ab0"/><rect x="10.5" y="0" width="1" height="3" fill="#6a6ab0"/><path d="M1 7.5 H13 M1 10.5 H13 M4.5 5 V14 M8.5 5 V14" stroke="#c4cbee" stroke-width="0.8"/><ellipse cx="10.2" cy="7.3" rx="1.7" ry="1.2" fill="#fbe0e0" stroke="#d81818" stroke-width="1.1"/></svg>
<div class="a " style="left:2px;top:562px;width:35px;height:17px;background:#cccccc;"></div>
<div class="a " style="left:37px;top:562px;width:1124px;height:17px;background:#b2b2b2;"></div>
<div class="a " style="left:1161px;top:562px;width:2px;height:169px;background:#cccccc;"></div>
<div class="a " style="left:1161px;top:579px;width:1px;height:150px;background:#f0f0f0;"></div>
<div class="a " style="left:55px;top:562px;width:1px;height:16px;background:#c6c6c6;"></div>
<div class="a " style="left:74px;top:562px;width:1px;height:16px;background:#c6c6c6;"></div>
<div class="a " style="left:84px;top:562px;width:1px;height:16px;background:#c6c6c6;"></div>
<div class="a " style="left:94px;top:562px;width:1px;height:16px;background:#c6c6c6;"></div>
<div class="a " style="left:222px;top:562px;width:1px;height:16px;background:#c6c6c6;"></div>
<div class="a " style="left:316px;top:562px;width:1px;height:16px;background:#c6c6c6;"></div>
<div class="a " style="left:415px;top:562px;width:1px;height:16px;background:#c6c6c6;"></div>
<div class="a " style="left:510px;top:562px;width:1px;height:16px;background:#c6c6c6;"></div>
<div class="a " style="left:629px;top:562px;width:1px;height:16px;background:#c6c6c6;"></div>
<div class="a " style="left:748px;top:562px;width:1px;height:16px;background:#c6c6c6;"></div>
<div class="a " style="left:841px;top:562px;width:1px;height:16px;background:#c6c6c6;"></div>
<div class="a " style="left:949px;top:562px;width:1px;height:16px;background:#c6c6c6;"></div>
<div class="a " style="left:959px;top:562px;width:1px;height:16px;background:#c6c6c6;"></div>
<div class="a " style="left:1054px;top:562px;width:1px;height:16px;background:#c6c6c6;"></div>
<div class="a " style="left:1146px;top:562px;width:1px;height:16px;background:#c6c6c6;"></div>
<div class="a " style="left:2px;top:578px;width:1161px;height:1px;background:#6c6c6c;"></div>
<div class="a t " style="left:97px;top:565px;letter-spacing:-0.10px;color:#7c7c7c;">Spread</div>
<div class="a t " style="left:226px;top:565px;letter-spacing:-0.10px;color:#7c7c7c;">Side</div>
<div class="a t " style="right:750.90px;top:565px;text-align:right;letter-spacing:-0.10px;color:#7c7c7c;">Qty</div>
<div class="a t " style="left:419px;top:565px;letter-spacing:-0.10px;color:#7c7c7c;">Symbol</div>
<div class="a t " style="right:537.90px;top:565px;text-align:right;letter-spacing:-0.10px;color:#7c7c7c;">Exp</div>
<div class="a t " style="right:418.90px;top:565px;text-align:right;letter-spacing:-0.10px;color:#7c7c7c;">Strike</div>
<div class="a t " style="left:751px;top:565px;letter-spacing:-0.10px;color:#7c7c7c;">Type</div>
<div class="a t " style="right:216.90px;top:565px;text-align:right;letter-spacing:-0.10px;color:#7c7c7c;">Price</div>
<div class="a t " style="right:112.90px;top:565px;text-align:right;letter-spacing:-0.10px;color:#7c7c7c;">Vol</div>
<div class="a t " style="right:19.90px;top:565px;text-align:right;letter-spacing:-0.10px;color:#7c7c7c;">Delta</div>
<div class="a " style="left:2px;top:579px;width:1159px;height:21px;background:#9bb0d0;"></div>
<div class="a " style="left:1px;top:579px;width:1px;height:151px;background:#56627a;"></div>
<svg class="a" style="left:3px;top:589px" width="12" height="7"><path d="M0.8 0.8 L11.2 0.8 L6 6 Z" fill="#a0c9fb" stroke="#4f95f0" stroke-width="1"/></svg>
<div class="a " style="left:41px;top:583px;width:13px;height:13px;box-sizing:border-box;border:1px solid;border-color:#5a5a5a #777 #777 #5a5a5a;background:linear-gradient(135deg,#b4b4b4,#e4e4e4 50%,#f8f8f8);"></div>
<svg class="a" style="left:41px;top:583px;overflow:visible" width="13" height="13"><path d="M3 6.5 L5.6 10 L11.5 1.5" stroke="#000" stroke-width="1.9" fill="none"/></svg>
<div class="a t " style="left:58px;top:584px;letter-spacing:-0.56px;">GLD</div>
<svg class="a" style="left:1133px;top:586px" width="17" height="8" viewBox="0 0 17 8"><path d="M0.8 1.9 H3.2 A2.6 2.6 0 0 1 3.2 7.1 H0.8" stroke="#22386a" stroke-width="1.6" fill="none" transform="translate(0.4,0.5)"/><path d="M0.8 1.5 H3.2 A2.6 2.6 0 0 1 3.2 6.7 H0.8" stroke="#f4f6fb" stroke-width="1.5" fill="none"/><rect x="6.4" y="2.8" width="8.6" height="2.6" fill="#e8861c"/><rect x="6.4" y="4.7" width="8.6" height="0.9" fill="#8a4a10"/><path d="M15 2.8 L17 4.1 L15 5.5 Z" fill="#f4f4f4"/></svg>
<div class="a " style="left:2px;top:600px;width:35px;height:129px;background:#cccccc;"></div>
<div class="a " style="left:37px;top:600px;width:1124px;height:17px;background:#ececec;"></div>
<div class="a " style="left:37px;top:616px;width:1124px;height:1px;background:#b6b6b6;"></div>
<div class="a " style="left:56px;top:600px;width:1px;height:17px;background:#b4b4b4;"></div>
<div class="a " style="left:75px;top:600px;width:1px;height:17px;background:#b4b4b4;"></div>
<div class="a " style="left:85px;top:600px;width:1px;height:17px;background:#b4b4b4;"></div>
<div class="a " style="left:94px;top:600px;width:1px;height:17px;background:#b4b4b4;"></div>
<div class="a " style="left:222px;top:600px;width:1px;height:17px;background:#b4b4b4;"></div>
<div class="a " style="left:316px;top:600px;width:1px;height:17px;background:#b4b4b4;"></div>
<div class="a " style="left:413px;top:600px;width:1px;height:17px;background:#b4b4b4;"></div>
<div class="a " style="left:506px;top:600px;width:1px;height:17px;background:#b4b4b4;"></div>
<div class="a " style="left:625px;top:600px;width:1px;height:17px;background:#b4b4b4;"></div>
<div class="a " style="left:743px;top:600px;width:1px;height:17px;background:#b4b4b4;"></div>
<div class="a " style="left:838px;top:600px;width:1px;height:17px;background:#b4b4b4;"></div>
<div class="a " style="left:944px;top:600px;width:1px;height:17px;background:#b4b4b4;"></div>
<div class="a " style="left:959px;top:600px;width:1px;height:17px;background:#b4b4b4;"></div>
<div class="a " style="left:1053px;top:600px;width:1px;height:17px;background:#b4b4b4;"></div>
<div class="a " style="left:1145px;top:600px;width:1px;height:17px;background:#b4b4b4;"></div>
<div class="a " style="left:42px;top:602px;width:13px;height:13px;box-sizing:border-box;border:1px solid;border-color:#5a5a5a #777 #777 #5a5a5a;background:linear-gradient(135deg,#b4b4b4,#e4e4e4 50%,#f8f8f8);"></div>
<svg class="a" style="left:42px;top:602px;overflow:visible" width="13" height="13"><path d="M3 6.5 L5.6 10 L11.5 1.5" stroke="#000" stroke-width="1.9" fill="none"/></svg>
<div class="a " style="left:61px;top:602px;width:13px;height:13px;background:#a9a9a9;border:1px solid #9a9a9a;box-sizing:border-box;"></div>
<svg class="a" style="left:61px;top:602px" width="13" height="13"><path d="M2 8 L4.5 5 L7 8.5 L10.5 4" stroke="#9c9c9c" stroke-width="1.2" fill="none"/></svg>
<svg class="a" style="left:86px;top:604px" width="8" height="8"><circle cx="4" cy="4" r="2.6" fill="#9cc8fa" stroke="#3f8ae8" stroke-width="1"/></svg>
<div class="a t " style="left:96px;top:603px;letter-spacing:-0.45px;">STK</div>
<div class="a t " style="left:224px;top:603px;letter-spacing:-0.15px;"></div>
<div class="a t " style="right:753.85px;top:603px;text-align:right;letter-spacing:-0.15px;">0</div>
<div class="a t " style="left:415px;top:603px;letter-spacing:-0.56px;">GLD</div>
<div class="a t " style="right:543.85px;top:603px;text-align:right;letter-spacing:-0.15px;"></div>
<div class="a t " style="right:423.85px;top:603px;text-align:right;letter-spacing:-0.15px;"></div>
<div class="a t " style="left:745px;top:603px;letter-spacing:-0.42px;">STOCK</div>
<div class="a t " style="right:222.85px;top:603px;text-align:right;letter-spacing:-0.15px;">.00</div>
<div class="a t " style="right:114.85px;top:603px;text-align:right;letter-spacing:-0.15px;">23.95%</div>
<div class="a t " style="right:21.85px;top:603px;text-align:right;letter-spacing:-0.15px;">.00</div>
<div class="a " style="left:37px;top:617px;width:1124px;height:16px;background:#ececec;"></div>
<div class="a " style="left:37px;top:632px;width:1124px;height:1px;background:#b6b6b6;"></div>
<div class="a " style="left:56px;top:617px;width:1px;height:16px;background:#b4b4b4;"></div>
<div class="a " style="left:75px;top:617px;width:1px;height:16px;background:#b4b4b4;"></div>
<div class="a " style="left:85px;top:617px;width:1px;height:16px;background:#b4b4b4;"></div>
<div class="a " style="left:94px;top:617px;width:1px;height:16px;background:#b4b4b4;"></div>
<div class="a " style="left:222px;top:617px;width:1px;height:16px;background:#b4b4b4;"></div>
<div class="a " style="left:316px;top:617px;width:1px;height:16px;background:#b4b4b4;"></div>
<div class="a " style="left:413px;top:617px;width:1px;height:16px;background:#b4b4b4;"></div>
<div class="a " style="left:506px;top:617px;width:1px;height:16px;background:#b4b4b4;"></div>
<div class="a " style="left:625px;top:617px;width:1px;height:16px;background:#b4b4b4;"></div>
<div class="a " style="left:743px;top:617px;width:1px;height:16px;background:#b4b4b4;"></div>
<div class="a " style="left:838px;top:617px;width:1px;height:16px;background:#b4b4b4;"></div>
<div class="a " style="left:944px;top:617px;width:1px;height:16px;background:#b4b4b4;"></div>
<div class="a " style="left:959px;top:617px;width:1px;height:16px;background:#b4b4b4;"></div>
<div class="a " style="left:1053px;top:617px;width:1px;height:16px;background:#b4b4b4;"></div>
<div class="a " style="left:1145px;top:617px;width:1px;height:16px;background:#b4b4b4;"></div>
<div class="a " style="left:42px;top:618px;width:13px;height:13px;box-sizing:border-box;border:1px solid;border-color:#5a5a5a #777 #777 #5a5a5a;background:linear-gradient(135deg,#b4b4b4,#e4e4e4 50%,#f8f8f8);"></div>
<svg class="a" style="left:42px;top:618px;overflow:visible" width="13" height="13"><path d="M3 6.5 L5.6 10 L11.5 1.5" stroke="#000" stroke-width="1.9" fill="none"/></svg>
<div class="a " style="left:61px;top:618px;width:13px;height:13px;background:#a9a9a9;border:1px solid #9a9a9a;box-sizing:border-box;"></div>
<svg class="a" style="left:61px;top:618px" width="13" height="13"><path d="M2 8 L4.5 5 L7 8.5 L10.5 4" stroke="#9c9c9c" stroke-width="1.2" fill="none"/></svg>
<svg class="a" style="left:86px;top:620px" width="8" height="8"><circle cx="4" cy="4" r="2.6" fill="#9cc8fa" stroke="#3f8ae8" stroke-width="1"/></svg>
<div class="a t " style="left:96px;top:619px;letter-spacing:-0.50px;">OPT</div>
<div class="a t " style="left:224px;top:619px;letter-spacing:-0.50px;">LONG</div>
<div class="a t " style="right:753.85px;top:619px;text-align:right;letter-spacing:-0.15px;">+15</div>
<div class="a t " style="left:415px;top:619px;letter-spacing:-0.56px;">GLD</div>
<div class="a t " style="right:543.50px;top:619px;text-align:right;letter-spacing:-0.50px;">JUN 11</div>
<div class="a t " style="right:423.85px;top:619px;text-align:right;letter-spacing:-0.15px;">105</div>
<div class="a t " style="left:745px;top:619px;letter-spacing:-0.50px;">PUT</div>
<div class="a t " style="right:222.85px;top:619px;text-align:right;letter-spacing:-0.15px;">1.78</div>
<div class="a t " style="right:114.85px;top:619px;text-align:right;letter-spacing:-0.15px;">25.96%</div>
<div class="a t " style="right:21.85px;top:619px;text-align:right;letter-spacing:-0.15px;">-112.37</div>
<div class="a " style="left:37px;top:633px;width:1124px;height:16px;background:#ececec;"></div>
<div class="a " style="left:37px;top:648px;width:1124px;height:1px;background:#b6b6b6;"></div>
<div class="a " style="left:56px;top:633px;width:1px;height:16px;background:#b4b4b4;"></div>
<div class="a " style="left:75px;top:633px;width:1px;height:16px;background:#b4b4b4;"></div>
<div class="a " style="left:85px;top:633px;width:1px;height:16px;background:#b4b4b4;"></div>
<div class="a " style="left:94px;top:633px;width:1px;height:16px;background:#b4b4b4;"></div>
<div class="a " style="left:222px;top:633px;width:1px;height:16px;background:#b4b4b4;"></div>
<div class="a " style="left:316px;top:633px;width:1px;height:16px;background:#b4b4b4;"></div>
<div class="a " style="left:413px;top:633px;width:1px;height:16px;background:#b4b4b4;"></div>
<div class="a " style="left:506px;top:633px;width:1px;height:16px;background:#b4b4b4;"></div>
<div class="a " style="left:625px;top:633px;width:1px;height:16px;background:#b4b4b4;"></div>
<div class="a " style="left:743px;top:633px;width:1px;height:16px;background:#b4b4b4;"></div>
<div class="a " style="left:838px;top:633px;width:1px;height:16px;background:#b4b4b4;"></div>
<div class="a " style="left:944px;top:633px;width:1px;height:16px;background:#b4b4b4;"></div>
<div class="a " style="left:959px;top:633px;width:1px;height:16px;background:#b4b4b4;"></div>
<div class="a " style="left:1053px;top:633px;width:1px;height:16px;background:#b4b4b4;"></div>
<div class="a " style="left:1145px;top:633px;width:1px;height:16px;background:#b4b4b4;"></div>
<div class="a " style="left:42px;top:634px;width:13px;height:13px;box-sizing:border-box;border:1px solid;border-color:#5a5a5a #777 #777 #5a5a5a;background:linear-gradient(135deg,#b4b4b4,#e4e4e4 50%,#f8f8f8);"></div>
<svg class="a" style="left:42px;top:634px;overflow:visible" width="13" height="13"><path d="M3 6.5 L5.6 10 L11.5 1.5" stroke="#000" stroke-width="1.9" fill="none"/></svg>
<div class="a " style="left:61px;top:634px;width:13px;height:13px;background:#a9a9a9;border:1px solid #9a9a9a;box-sizing:border-box;"></div>
<svg class="a" style="left:61px;top:634px" width="13" height="13"><path d="M2 8 L4.5 5 L7 8.5 L10.5 4" stroke="#9c9c9c" stroke-width="1.2" fill="none"/></svg>
<svg class="a" style="left:86px;top:636px" width="8" height="8"><circle cx="4" cy="4" r="2.6" fill="#9cc8fa" stroke="#3f8ae8" stroke-width="1"/></svg>
<div class="a t " style="left:96px;top:635px;letter-spacing:-0.50px;">OPT</div>
<div class="a t " style="left:224px;top:635px;letter-spacing:-0.82px;">SHORT</div>
<div class="a t " style="right:753.85px;top:635px;text-align:right;letter-spacing:-0.15px;">-15</div>
<div class="a t " style="left:415px;top:635px;letter-spacing:-0.56px;">GLD</div>
<div class="a t " style="right:543.50px;top:635px;text-align:right;letter-spacing:-0.50px;">JUN 11</div>
<div class="a t " style="right:423.85px;top:635px;text-align:right;letter-spacing:-0.15px;">112</div>
<div class="a t " style="left:745px;top:635px;letter-spacing:-0.50px;">PUT</div>
<div class="a t " style="right:222.85px;top:635px;text-align:right;letter-spacing:-0.15px;">4.25</div>
<div class="a t " style="right:114.85px;top:635px;text-align:right;letter-spacing:-0.15px;">24.48%</div>
<div class="a t " style="right:21.85px;top:635px;text-align:right;letter-spacing:-0.15px;">180.07</div>
<div class="a " style="left:37px;top:649px;width:1124px;height:16px;background:#ececec;"></div>
<div class="a " style="left:37px;top:664px;width:1124px;height:1px;background:#b6b6b6;"></div>
<div class="a " style="left:56px;top:649px;width:1px;height:16px;background:#b4b4b4;"></div>
<div class="a " style="left:75px;top:649px;width:1px;height:16px;background:#b4b4b4;"></div>
<div class="a " style="left:85px;top:649px;width:1px;height:16px;background:#b4b4b4;"></div>
<div class="a " style="left:94px;top:649px;width:1px;height:16px;background:#b4b4b4;"></div>
<div class="a " style="left:222px;top:649px;width:1px;height:16px;background:#b4b4b4;"></div>
<div class="a " style="left:316px;top:649px;width:1px;height:16px;background:#b4b4b4;"></div>
<div class="a " style="left:413px;top:649px;width:1px;height:16px;background:#b4b4b4;"></div>
<div class="a " style="left:506px;top:649px;width:1px;height:16px;background:#b4b4b4;"></div>
<div class="a " style="left:625px;top:649px;width:1px;height:16px;background:#b4b4b4;"></div>
<div class="a " style="left:743px;top:649px;width:1px;height:16px;background:#b4b4b4;"></div>
<div class="a " style="left:838px;top:649px;width:1px;height:16px;background:#b4b4b4;"></div>
<div class="a " style="left:944px;top:649px;width:1px;height:16px;background:#b4b4b4;"></div>
<div class="a " style="left:959px;top:649px;width:1px;height:16px;background:#b4b4b4;"></div>
<div class="a " style="left:1053px;top:649px;width:1px;height:16px;background:#b4b4b4;"></div>
<div class="a " style="left:1145px;top:649px;width:1px;height:16px;background:#b4b4b4;"></div>
<div class="a " style="left:42px;top:650px;width:13px;height:13px;box-sizing:border-box;border:1px solid;border-color:#5a5a5a #777 #777 #5a5a5a;background:linear-gradient(135deg,#b4b4b4,#e4e4e4 50%,#f8f8f8);"></div>
<svg class="a" style="left:42px;top:650px;overflow:visible" width="13" height="13"><path d="M3 6.5 L5.6 10 L11.5 1.5" stroke="#000" stroke-width="1.9" fill="none"/></svg>
<div class="a " style="left:61px;top:650px;width:13px;height:13px;background:#a9a9a9;border:1px solid #9a9a9a;box-sizing:border-box;"></div>
<svg class="a" style="left:61px;top:650px" width="13" height="13"><path d="M2 8 L4.5 5 L7 8.5 L10.5 4" stroke="#9c9c9c" stroke-width="1.2" fill="none"/></svg>
<svg class="a" style="left:86px;top:652px" width="8" height="8"><circle cx="4" cy="4" r="2.6" fill="#9cc8fa" stroke="#3f8ae8" stroke-width="1"/></svg>
<div class="a t " style="left:96px;top:651px;letter-spacing:-0.50px;">OPT</div>
<div class="a t " style="left:224px;top:651px;letter-spacing:-0.82px;">SHORT</div>
<div class="a t " style="right:753.85px;top:651px;text-align:right;letter-spacing:-0.15px;">-17</div>
<div class="a t " style="left:415px;top:651px;letter-spacing:-0.56px;">GLD</div>
<div class="a t " style="right:543.50px;top:651px;text-align:right;letter-spacing:-0.50px;">JUN 11</div>
<div class="a t " style="right:423.85px;top:651px;text-align:right;letter-spacing:-0.15px;">120</div>
<div class="a t " style="left:745px;top:651px;letter-spacing:-0.50px;">PUT</div>
<div class="a t " style="right:222.85px;top:651px;text-align:right;letter-spacing:-0.15px;">2.97</div>
<div class="a t " style="right:114.85px;top:651px;text-align:right;letter-spacing:-0.15px;">23.42%</div>
<div class="a t " style="right:21.85px;top:651px;text-align:right;letter-spacing:-0.15px;">341.13</div>
<div class="a " style="left:37px;top:665px;width:1124px;height:16px;background:#ececec;"></div>
<div class="a " style="left:37px;top:680px;width:1124px;height:1px;background:#b6b6b6;"></div>
<div class="a " style="left:56px;top:665px;width:1px;height:16px;background:#b4b4b4;"></div>
<div class="a " style="left:75px;top:665px;width:1px;height:16px;background:#b4b4b4;"></div>
<div class="a " style="left:85px;top:665px;width:1px;height:16px;background:#b4b4b4;"></div>
<div class="a " style="left:94px;top:665px;width:1px;height:16px;background:#b4b4b4;"></div>
<div class="a " style="left:222px;top:665px;width:1px;height:16px;background:#b4b4b4;"></div>
<div class="a " style="left:316px;top:665px;width:1px;height:16px;background:#b4b4b4;"></div>
<div class="a " style="left:413px;top:665px;width:1px;height:16px;background:#b4b4b4;"></div>
<div class="a " style="left:506px;top:665px;width:1px;height:16px;background:#b4b4b4;"></div>
<div class="a " style="left:625px;top:665px;width:1px;height:16px;background:#b4b4b4;"></div>
<div class="a " style="left:743px;top:665px;width:1px;height:16px;background:#b4b4b4;"></div>
<div class="a " style="left:838px;top:665px;width:1px;height:16px;background:#b4b4b4;"></div>
<div class="a " style="left:944px;top:665px;width:1px;height:16px;background:#b4b4b4;"></div>
<div class="a " style="left:959px;top:665px;width:1px;height:16px;background:#b4b4b4;"></div>
<div class="a " style="left:1053px;top:665px;width:1px;height:16px;background:#b4b4b4;"></div>
<div class="a " style="left:1145px;top:665px;width:1px;height:16px;background:#b4b4b4;"></div>
<div class="a " style="left:42px;top:666px;width:13px;height:13px;box-sizing:border-box;border:1px solid;border-color:#5a5a5a #777 #777 #5a5a5a;background:linear-gradient(135deg,#b4b4b4,#e4e4e4 50%,#f8f8f8);"></div>
<svg class="a" style="left:42px;top:666px;overflow:visible" width="13" height="13"><path d="M3 6.5 L5.6 10 L11.5 1.5" stroke="#000" stroke-width="1.9" fill="none"/></svg>
<div class="a " style="left:61px;top:666px;width:13px;height:13px;background:#a9a9a9;border:1px solid #9a9a9a;box-sizing:border-box;"></div>
<svg class="a" style="left:61px;top:666px" width="13" height="13"><path d="M2 8 L4.5 5 L7 8.5 L10.5 4" stroke="#9c9c9c" stroke-width="1.2" fill="none"/></svg>
<svg class="a" style="left:86px;top:668px" width="8" height="8"><circle cx="4" cy="4" r="2.6" fill="#9cc8fa" stroke="#3f8ae8" stroke-width="1"/></svg>
<div class="a t " style="left:96px;top:667px;letter-spacing:-0.50px;">OPT</div>
<div class="a t " style="left:224px;top:667px;letter-spacing:-0.82px;">SHORT</div>
<div class="a t " style="right:753.85px;top:667px;text-align:right;letter-spacing:-0.15px;">-5</div>
<div class="a t " style="left:415px;top:667px;letter-spacing:-0.56px;">GLD</div>
<div class="a t " style="right:543.50px;top:667px;text-align:right;letter-spacing:-0.50px;">JUN 11</div>
<div class="a t " style="right:423.85px;top:667px;text-align:right;letter-spacing:-0.15px;">145</div>
<div class="a t " style="left:745px;top:667px;letter-spacing:-0.11px;">CALL</div>
<div class="a t " style="right:222.85px;top:667px;text-align:right;letter-spacing:-0.15px;">4.27</div>
<div class="a t " style="right:114.85px;top:667px;text-align:right;letter-spacing:-0.15px;">23.71%</div>
<div class="a t " style="right:21.85px;top:667px;text-align:right;letter-spacing:-0.15px;">-210.44</div>
<div class="a " style="left:37px;top:681px;width:1124px;height:16px;background:#ececec;"></div>
<div class="a " style="left:37px;top:696px;width:1124px;height:1px;background:#a0a0a0;"></div>
<div class="a " style="left:56px;top:681px;width:1px;height:16px;background:#b4b4b4;"></div>
<div class="a " style="left:75px;top:681px;width:1px;height:16px;background:#b4b4b4;"></div>
<div class="a " style="left:85px;top:681px;width:1px;height:16px;background:#b4b4b4;"></div>
<div class="a " style="left:94px;top:681px;width:1px;height:16px;background:#b4b4b4;"></div>
<div class="a " style="left:222px;top:681px;width:1px;height:16px;background:#b4b4b4;"></div>
<div class="a " style="left:316px;top:681px;width:1px;height:16px;background:#b4b4b4;"></div>
<div class="a " style="left:413px;top:681px;width:1px;height:16px;background:#b4b4b4;"></div>
<div class="a " style="left:506px;top:681px;width:1px;height:16px;background:#b4b4b4;"></div>
<div class="a " style="left:625px;top:681px;width:1px;height:16px;background:#b4b4b4;"></div>
<div class="a " style="left:743px;top:681px;width:1px;height:16px;background:#b4b4b4;"></div>
<div class="a " style="left:838px;top:681px;width:1px;height:16px;background:#b4b4b4;"></div>
<div class="a " style="left:944px;top:681px;width:1px;height:16px;background:#b4b4b4;"></div>
<div class="a " style="left:959px;top:681px;width:1px;height:16px;background:#b4b4b4;"></div>
<div class="a " style="left:1053px;top:681px;width:1px;height:16px;background:#b4b4b4;"></div>
<div class="a " style="left:1145px;top:681px;width:1px;height:16px;background:#b4b4b4;"></div>
<div class="a " style="left:42px;top:682px;width:13px;height:13px;box-sizing:border-box;border:1px solid;border-color:#5a5a5a #777 #777 #5a5a5a;background:linear-gradient(135deg,#b4b4b4,#e4e4e4 50%,#f8f8f8);"></div>
<svg class="a" style="left:42px;top:682px;overflow:visible" width="13" height="13"><path d="M3 6.5 L5.6 10 L11.5 1.5" stroke="#000" stroke-width="1.9" fill="none"/></svg>
<div class="a " style="left:61px;top:682px;width:13px;height:13px;background:#a9a9a9;border:1px solid #9a9a9a;box-sizing:border-box;"></div>
<svg class="a" style="left:61px;top:682px" width="13" height="13"><path d="M2 8 L4.5 5 L7 8.5 L10.5 4" stroke="#9c9c9c" stroke-width="1.2" fill="none"/></svg>
<svg class="a" style="left:86px;top:684px" width="8" height="8"><circle cx="4" cy="4" r="2.6" fill="#9cc8fa" stroke="#3f8ae8" stroke-width="1"/></svg>
<div class="a t " style="left:96px;top:683px;letter-spacing:-0.50px;">OPT</div>
<div class="a t " style="left:224px;top:683px;letter-spacing:-0.82px;">SHORT</div>
<div class="a t " style="right:753.85px;top:683px;text-align:right;letter-spacing:-0.15px;">-5</div>
<div class="a t " style="left:415px;top:683px;letter-spacing:-0.56px;">GLD</div>
<div class="a t " style="right:543.50px;top:683px;text-align:right;letter-spacing:-0.50px;">JUN 11</div>
<div class="a t " style="right:423.85px;top:683px;text-align:right;letter-spacing:-0.15px;">160</div>
<div class="a t " style="left:745px;top:683px;letter-spacing:-0.11px;">CALL</div>
<div class="a t " style="right:222.85px;top:683px;text-align:right;letter-spacing:-0.15px;">3.65</div>
<div class="a t " style="right:114.85px;top:683px;text-align:right;letter-spacing:-0.15px;">25.00%</div>
<div class="a t " style="right:21.85px;top:683px;text-align:right;letter-spacing:-0.15px;">-122.86</div>
<div class="a " style="left:37px;top:697px;width:1124px;height:16px;background:#ddfdbc;"></div>
<div class="a " style="left:37px;top:712px;width:1124px;height:1px;background:#b2b0b2;"></div>
<div class="a " style="left:56px;top:697px;width:1px;height:16px;background:rgba(120,120,120,.5);"></div>
<div class="a " style="left:75px;top:697px;width:1px;height:16px;background:rgba(120,120,120,.5);"></div>
<div class="a " style="left:85px;top:697px;width:1px;height:16px;background:rgba(120,120,120,.5);"></div>
<div class="a " style="left:94px;top:697px;width:1px;height:16px;background:rgba(120,120,120,.5);"></div>
<div class="a " style="left:510px;top:697px;width:1px;height:16px;background:rgba(120,120,120,.5);"></div>
<div class="a " style="left:629px;top:697px;width:1px;height:16px;background:rgba(120,120,120,.5);"></div>
<div class="a " style="left:748px;top:697px;width:1px;height:16px;background:rgba(120,120,120,.5);"></div>
<div class="a " style="left:842px;top:697px;width:1px;height:16px;background:rgba(120,120,120,.5);"></div>
<div class="a " style="left:959px;top:697px;width:1px;height:16px;background:rgba(120,120,120,.5);"></div>
<div class="a " style="left:1054px;top:697px;width:1px;height:16px;background:rgba(120,120,120,.5);"></div>
<div class="a " style="left:1146px;top:697px;width:1px;height:16px;background:rgba(120,120,120,.5);"></div>
<div class="a " style="left:42px;top:698px;width:13px;height:13px;box-sizing:border-box;border:1px solid;border-color:#5a5a5a #777 #777 #5a5a5a;background:linear-gradient(135deg,#b4b4b4,#e4e4e4 50%,#f8f8f8);"></div>
<svg class="a" style="left:42px;top:698px;overflow:visible" width="13" height="13"><path d="M3 6.5 L5.6 10 L11.5 1.5" stroke="#000" stroke-width="1.9" fill="none"/></svg>
<div class="a " style="left:61px;top:698px;width:13px;height:13px;background:#a9a9a9;border:1px solid #9a9a9a;box-sizing:border-box;"></div>
<svg class="a" style="left:61px;top:698px" width="13" height="13"><path d="M2 8 L4.5 5 L7 8.5 L10.5 4" stroke="#9c9c9c" stroke-width="1.2" fill="none"/></svg>
<svg class="a" style="left:86px;top:700px" width="8" height="8"><circle cx="4" cy="4" r="2.6" fill="#9cc8fa" stroke="#3f8ae8" stroke-width="1"/></svg>
<div class="a " style="left:95px;top:697px;width:128px;height:15px;background:#ddfdbc;border:1px solid #2a2a2a;box-sizing:border-box;"></div>
<svg class="a" style="left:215px;top:704px" width="7" height="7"><path d="M7 0 L7 7 L0 7 Z" fill="#0a14e6"/></svg>
<div class="a t " style="left:97px;top:699px;letter-spacing:-0.42px;">STOCK</div>
<div class="a " style="left:224px;top:697px;width:94px;height:15px;background:#ddfdbc;border:1px solid #2a2a2a;box-sizing:border-box;"></div>
<svg class="a" style="left:310px;top:704px" width="7" height="7"><path d="M7 0 L7 7 L0 7 Z" fill="#0a14e6"/></svg>
<div class="a t " style="left:226px;top:699px;letter-spacing:-0.50px;">BUY</div>
<div class="a " style="left:318px;top:697px;width:98px;height:15px;background:#ddfdbc;border:1px solid #2a2a2a;box-sizing:border-box;box-shadow:inset 1px 1px 0 #777;"></div>
<div class="a " style="left:402px;top:698px;width:13px;height:13px;background:#ececec;"></div>
<div class="a t " style="right:776.85px;top:699px;text-align:right;letter-spacing:-0.15px;">+100</div>
<div class="a sb" style="left:390px;top:698px;width:12px;height:6px;"><svg class="a" style="left:0;top:0" width="12" height="6" viewBox="0 0 12 7"><path d="M4.2 4.2 L6 2.4 L7.8 4.2 Z" fill="#555"/></svg></div><div class="a sb" style="left:390px;top:705px;width:12px;height:6px;"><svg class="a" style="left:0;top:0" width="12" height="6" viewBox="0 0 12 7"><path d="M4.2 2.6 L6 4.4 L7.8 2.6 Z" fill="#555"/></svg></div>
<svg class="a" style="left:404px;top:702px" width="9" height="6"><path d="M1 0.8 L8 0.8 L4.5 4.8 Z" fill="#a0c9fb" stroke="#3f8aee" stroke-width="1"/></svg>
<div class="a t " style="left:418px;top:699px;letter-spacing:-0.56px;">GLD</div>
<div class="a t " style="left:749px;top:699px;letter-spacing:-0.42px;">STOCK</div>
<div class="a t " style="right:228.85px;top:699px;text-align:right;letter-spacing:-0.15px;">95.42</div>
<div class="a sb" style="left:938px;top:698px;width:11px;height:6px;"><svg class="a" style="left:0;top:0" width="11" height="6" viewBox="0 0 12 7"><path d="M4.2 4.2 L6 2.4 L7.8 4.2 Z" fill="#555"/></svg></div><div class="a sb" style="left:938px;top:705px;width:11px;height:6px;"><svg class="a" style="left:0;top:0" width="11" height="6" viewBox="0 0 12 7"><path d="M4.2 2.6 L6 4.4 L7.8 2.6 Z" fill="#555"/></svg></div>
<svg class="a" style="left:951px;top:698px" width="10" height="14" viewBox="0 0 10 14"><defs><linearGradient id="rl0" x1="0" y1="0" x2="1" y2="1"><stop offset="0" stop-color="#ffe4dc"/><stop offset="0.45" stop-color="#f47060"/><stop offset="1" stop-color="#e03020"/></linearGradient></defs><path d="M2.6 6 V4 A2.4 2.4 0 0 1 7.4 4 V6" stroke="#a8a8b2" stroke-width="1.3" fill="none"/><rect x="1" y="5.8" width="8" height="7" rx="0.8" fill="url(#rl0)" stroke="#e0a8a0" stroke-width="0.7"/></svg>
<div class="a t " style="right:113.85px;top:699px;text-align:right;letter-spacing:-0.15px;">23.95%</div>
<div class="a t " style="right:20.85px;top:699px;text-align:right;letter-spacing:-0.15px;">100.00</div>
<svg class="a" style="left:1147px;top:698px" width="14" height="14" viewBox="0 0 14 14"><circle cx="6.8" cy="7.2" r="5.8" fill="#d41414" stroke="#7a0a0a" stroke-width="1"/><path d="M4.2 4.6 L9.4 9.8 M9.4 4.6 L4.2 9.8" stroke="#fff" stroke-width="1.9"/></svg>
<div class="a " style="left:37px;top:713px;width:1124px;height:16px;background:#ffcfbc;"></div>
<div class="a " style="left:37px;top:728px;width:1124px;height:1px;background:#b2b0b2;"></div>
<div class="a " style="left:56px;top:713px;width:1px;height:16px;background:rgba(120,120,120,.5);"></div>
<div class="a " style="left:75px;top:713px;width:1px;height:16px;background:rgba(120,120,120,.5);"></div>
<div class="a " style="left:85px;top:713px;width:1px;height:16px;background:rgba(120,120,120,.5);"></div>
<div class="a " style="left:94px;top:713px;width:1px;height:16px;background:rgba(120,120,120,.5);"></div>
<div class="a " style="left:510px;top:713px;width:1px;height:16px;background:rgba(120,120,120,.5);"></div>
<div class="a " style="left:629px;top:713px;width:1px;height:16px;background:rgba(120,120,120,.5);"></div>
<div class="a " style="left:748px;top:713px;width:1px;height:16px;background:rgba(120,120,120,.5);"></div>
<div class="a " style="left:842px;top:713px;width:1px;height:16px;background:rgba(120,120,120,.5);"></div>
<div class="a " style="left:959px;top:713px;width:1px;height:16px;background:rgba(120,120,120,.5);"></div>
<div class="a " style="left:1054px;top:713px;width:1px;height:16px;background:rgba(120,120,120,.5);"></div>
<div class="a " style="left:1146px;top:713px;width:1px;height:16px;background:rgba(120,120,120,.5);"></div>
<div class="a " style="left:42px;top:714px;width:13px;height:13px;box-sizing:border-box;border:1px solid;border-color:#5a5a5a #777 #777 #5a5a5a;background:linear-gradient(135deg,#b4b4b4,#e4e4e4 50%,#f8f8f8);"></div>
<svg class="a" style="left:42px;top:714px;overflow:visible" width="13" height="13"><path d="M3 6.5 L5.6 10 L11.5 1.5" stroke="#000" stroke-width="1.9" fill="none"/></svg>
<div class="a " style="left:61px;top:714px;width:13px;height:13px;background:#a9a9a9;border:1px solid #9a9a9a;box-sizing:border-box;"></div>
<svg class="a" style="left:61px;top:714px" width="13" height="13"><path d="M2 8 L4.5 5 L7 8.5 L10.5 4" stroke="#9c9c9c" stroke-width="1.2" fill="none"/></svg>
<svg class="a" style="left:86px;top:716px" width="8" height="8"><circle cx="4" cy="4" r="2.6" fill="#9cc8fa" stroke="#3f8ae8" stroke-width="1"/></svg>
<div class="a " style="left:95px;top:713px;width:128px;height:15px;background:#ffcfbc;border:1px solid #2a2a2a;box-sizing:border-box;"></div>
<svg class="a" style="left:215px;top:720px" width="7" height="7"><path d="M7 0 L7 7 L0 7 Z" fill="#0a14e6"/></svg>
<div class="a t " style="left:97px;top:715px;letter-spacing:-0.42px;">STOCK</div>
<div class="a " style="left:224px;top:713px;width:94px;height:15px;background:#ffcfbc;border:1px solid #2a2a2a;box-sizing:border-box;"></div>
<svg class="a" style="left:310px;top:720px" width="7" height="7"><path d="M7 0 L7 7 L0 7 Z" fill="#0a14e6"/></svg>
<div class="a t " style="left:226px;top:715px;letter-spacing:-0.50px;">SELL</div>
<div class="a " style="left:318px;top:713px;width:98px;height:15px;background:#ffcfbc;border:1px solid #2a2a2a;box-sizing:border-box;box-shadow:inset 1px 1px 0 #777;"></div>
<div class="a " style="left:402px;top:714px;width:13px;height:13px;background:#ececec;"></div>
<div class="a t " style="right:776.85px;top:715px;text-align:right;letter-spacing:-0.15px;">-100</div>
<div class="a sb" style="left:390px;top:714px;width:12px;height:6px;"><svg class="a" style="left:0;top:0" width="12" height="6" viewBox="0 0 12 7"><path d="M4.2 4.2 L6 2.4 L7.8 4.2 Z" fill="#555"/></svg></div><div class="a sb" style="left:390px;top:721px;width:12px;height:6px;"><svg class="a" style="left:0;top:0" width="12" height="6" viewBox="0 0 12 7"><path d="M4.2 2.6 L6 4.4 L7.8 2.6 Z" fill="#555"/></svg></div>
<svg class="a" style="left:404px;top:718px" width="9" height="6"><path d="M1 0.8 L8 0.8 L4.5 4.8 Z" fill="#a0c9fb" stroke="#3f8aee" stroke-width="1"/></svg>
<div class="a t " style="left:418px;top:715px;letter-spacing:-0.56px;">GLD</div>
<div class="a t " style="left:749px;top:715px;letter-spacing:-0.42px;">STOCK</div>
<div class="a t " style="right:228.85px;top:715px;text-align:right;letter-spacing:-0.15px;">100.00</div>
<div class="a sb" style="left:938px;top:714px;width:11px;height:6px;"><svg class="a" style="left:0;top:0" width="11" height="6" viewBox="0 0 12 7"><path d="M4.2 4.2 L6 2.4 L7.8 4.2 Z" fill="#555"/></svg></div><div class="a sb" style="left:938px;top:721px;width:11px;height:6px;"><svg class="a" style="left:0;top:0" width="11" height="6" viewBox="0 0 12 7"><path d="M4.2 2.6 L6 4.4 L7.8 2.6 Z" fill="#555"/></svg></div>
<svg class="a" style="left:951px;top:714px" width="10" height="14" viewBox="0 0 10 14"><defs><linearGradient id="rl1" x1="0" y1="0" x2="1" y2="1"><stop offset="0" stop-color="#ffe4dc"/><stop offset="0.45" stop-color="#f47060"/><stop offset="1" stop-color="#e03020"/></linearGradient></defs><path d="M2.6 6 V4 A2.4 2.4 0 0 1 7.4 4 V6" stroke="#a8a8b2" stroke-width="1.3" fill="none"/><rect x="1" y="5.8" width="8" height="7" rx="0.8" fill="url(#rl1)" stroke="#e0a8a0" stroke-width="0.7"/></svg>
<div class="a t " style="right:113.85px;top:715px;text-align:right;letter-spacing:-0.15px;">23.95%</div>
<div class="a t " style="right:20.85px;top:715px;text-align:right;letter-spacing:-0.15px;">-100.00</div>
<svg class="a" style="left:1147px;top:714px" width="14" height="14" viewBox="0 0 14 14"><circle cx="6.8" cy="7.2" r="5.8" fill="#d41414" stroke="#7a0a0a" stroke-width="1"/><path d="M4.2 4.6 L9.4 9.8 M9.4 4.6 L4.2 9.8" stroke="#fff" stroke-width="1.9"/></svg>
<div class="a " style="left:2px;top:728px;width:1161px;height:2px;background:#8e8e8e;"></div>
<div class="a " style="left:2px;top:730px;width:1161px;height:1px;background:#f4f4f4;"></div>
<div class="a " style="left:2px;top:731px;width:1161px;height:73px;background:#cccccc;"></div>
<div class="a " style="left:0px;top:804px;width:1165px;height:4px;background:#3d5a80;"></div>
<div class="a " style="left:0px;top:808px;width:1165px;height:2px;background:#c6c6c6;"></div>
<div class="a " style="left:20px;top:800px;width:29px;height:12px;border-radius:5px 5px 0 0;background:linear-gradient(#b4c0d2,#8495b0);border:1px solid #486286;box-sizing:border-box;"></div>
<svg class="a" style="left:29px;top:802px" width="11" height="9" viewBox="0 0 11 9"><path d="M1.5 5.5 L5.5 1.5 L9.5 5.5 M1.5 9 L5.5 5 L9.5 9" stroke="#1414ff" stroke-width="1.1" fill="none"/></svg>
</div>
</body></html>
